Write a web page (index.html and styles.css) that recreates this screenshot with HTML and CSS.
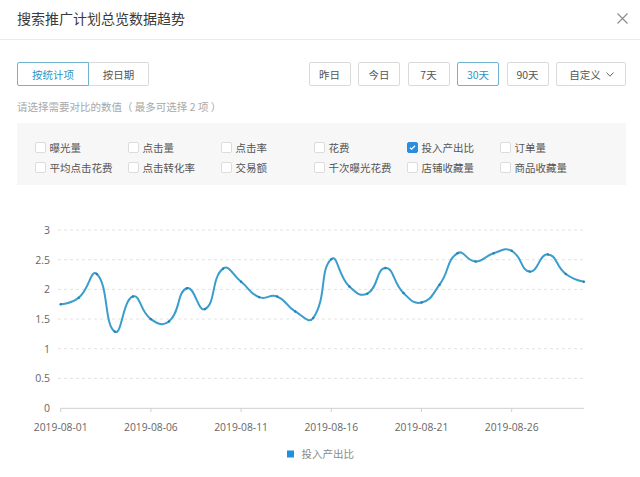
FILE: index.html
```html
<!DOCTYPE html>
<html lang="zh-CN">
<head>
<meta charset="utf-8">
<title>搜索推广计划总览数据趋势</title>
<link rel="stylesheet" href="styles.css">
</head>
<body>
<div class="header">
  <div class="title">搜索推广计划总览数据趋势</div>
  <svg class="close" viewBox="0 0 11 11"><path d="M0.5 0.5L10.5 10.5M10.5 0.5L0.5 10.5" /></svg>
</div>
<div class="toolbar">
  <div class="seg">
    <div class="btn active">按统计项</div>
    <div class="btn">按日期</div>
  </div>
  <div class="days">
    <div class="btn">昨日</div>
    <div class="btn">今日</div>
    <div class="btn">7天</div>
    <div class="btn active">30天</div>
    <div class="btn">90天</div>
    <div class="btn custom">自定义<svg class="chev" viewBox="0 0 8 5"><path d="M0.5 0.5L4 4.2L7.5 0.5"/></svg></div>
  </div>
</div>
<div class="hint">请选择需要对比的数值（ 最多可选择 2 项 ）</div>
<div class="metrics">
  <div class="opt"><span class="cb"></span>曝光量</div>
  <div class="opt"><span class="cb"></span>点击量</div>
  <div class="opt"><span class="cb"></span>点击率</div>
  <div class="opt"><span class="cb"></span>花费</div>
  <div class="opt"><span class="cb on"><svg viewBox="0 0 11 11"><path d="M2.3 5.6L4.4 7.6L8.6 3.3"/></svg></span>投入产出比</div>
  <div class="opt"><span class="cb"></span>订单量</div>
  <div class="opt"><span class="cb"></span>平均点击花费</div>
  <div class="opt"><span class="cb"></span>点击转化率</div>
  <div class="opt"><span class="cb"></span>交易额</div>
  <div class="opt"><span class="cb"></span>千次曝光花费</div>
  <div class="opt"><span class="cb"></span>店铺收藏量</div>
  <div class="opt"><span class="cb"></span>商品收藏量</div>
</div>
<svg class="chart" id="chart" width="640" height="292" viewBox="0 185 640 292">
  <g class="grid">
    <line x1="58" y1="230" x2="584" y2="230"/>
    <line x1="58" y1="259.7" x2="584" y2="259.7"/>
    <line x1="58" y1="289.4" x2="584" y2="289.4"/>
    <line x1="58" y1="319" x2="584" y2="319"/>
    <line x1="58" y1="348.7" x2="584" y2="348.7"/>
    <line x1="58" y1="378.4" x2="584" y2="378.4"/>
  </g>
  <line class="axis" x1="60.7" y1="408.3" x2="584" y2="408.3"/>
  <g class="ticks">
    <line x1="60.7" y1="408.3" x2="60.7" y2="412"/>
    <line x1="150.9" y1="408.3" x2="150.9" y2="412"/>
    <line x1="241.1" y1="408.3" x2="241.1" y2="412"/>
    <line x1="331.3" y1="408.3" x2="331.3" y2="412"/>
    <line x1="421.5" y1="408.3" x2="421.5" y2="412"/>
    <line x1="511.7" y1="408.3" x2="511.7" y2="412"/>
  </g>
  <g class="ylab">
    <text x="50" y="233.8">3</text>
    <text x="50" y="263.5">2.5</text>
    <text x="50" y="293.2">2</text>
    <text x="50" y="322.8">1.5</text>
    <text x="50" y="352.5">1</text>
    <text x="50" y="382.2">0.5</text>
    <text x="50" y="411.9">0</text>
  </g>
  <g class="xlab">
    <text x="60.7" y="431">2019-08-01</text>
    <text x="150.9" y="431">2019-08-06</text>
    <text x="241.1" y="431">2019-08-11</text>
    <text x="331.3" y="431">2019-08-16</text>
    <text x="421.5" y="431">2019-08-21</text>
    <text x="511.7" y="431">2019-08-26</text>
  </g>
  <path id="series" class="series" d=""/>
  <g id="dots" class="dots"></g>
  <rect class="legend-box" x="287" y="450.5" width="7" height="7"/>
  <text class="legend-text" x="301.5" y="458">投入产出比</text>
</svg>
<script src="script.js" defer></script>
</body>
</html>
```
FILE: styles.css
```css
* { box-sizing: border-box; }
html, body { margin: 0; padding: 0; background: #fff; }
body {
  font-family: "Noto Sans CJK SC", "Open Sans", sans-serif;
  color: #333;
  width: 640px;
  height: 477px;
  overflow: hidden;
}
.header {
  height: 40px;
  border-bottom: 1px solid #ebebeb;
  display: flex;
  align-items: center;
  justify-content: space-between;
  padding: 0 12px 3px 17px;
}
.title { font-size: 14px; color: #3a3a3a; }
.close { width: 11px; height: 11px; fill: none; stroke: #8a8a8a; stroke-width: 1.1; }
.toolbar {
  display: flex;
  justify-content: space-between;
  align-items: center;
  margin: 22px 14px 0 17px;
  height: 24px;
}
.seg { display: flex; }
.btn {
  height: 24px;
  border: 1px solid #dadada;
  background: #fff;
  font-size: 10.5px;
  color: #555;
  display: flex;
  align-items: center;
  justify-content: center;
  border-radius: 2px;
  white-space: nowrap;
}
.seg .btn:first-child { width: 72px; border-radius: 2px 0 0 2px; }
.seg .btn:last-child { width: 60px; border-radius: 0 2px 2px 0; border-left: none; }
.btn.active { border-color: #6fb4cf; color: #2f94c4; }
.days { display: flex; gap: 7.5px; }
.days .btn { width: 42px; }
.days .btn.custom { width: 70px; gap: 5px; padding-left: 1px; }
.chev { width: 8px; height: 5px; fill: none; stroke: #666; stroke-width: 1; }
.hint {
  margin: 13px 0 0 17px;
  font-size: 10.5px;
  line-height: 16px;
  color: #a8a8a8;
}
.metrics {
  margin: 8px 14px 0 17px;
  height: 62px;
  background: #f7f7f7;
  padding: 14px 0 0 18px;
  display: grid;
  grid-template-columns: repeat(6, 93px);
  grid-auto-rows: 20px;
}
.opt {
  display: flex;
  align-items: center;
  font-size: 10.5px;
  color: #555;
  white-space: nowrap;
}
.cb {
  width: 11px;
  height: 11px;
  border: 1px solid #dcdcdc;
  background: #fff;
  border-radius: 2px;
  margin-right: 3.5px;
  flex: none;
  display: flex;
}
.cb.on { background: #2a8de0; border-color: #2a8de0; }
.cb svg { width: 9px; height: 9px; fill: none; stroke: #fff; stroke-width: 1.5; }
.chart { display: block; }
.grid line { stroke: #e3e3e3; stroke-width: 1; stroke-dasharray: 3 3; }
.axis { stroke: #cfcfcf; stroke-width: 1; }
.ticks line { stroke: #cfcfcf; stroke-width: 1; }
.ylab text { font-family: "Open Sans", sans-serif; font-size: 10.5px; fill: #666; text-anchor: end; }
.xlab text { font-family: "Open Sans", sans-serif; font-size: 10.3px; fill: #666; text-anchor: middle; }
.series { fill: none; stroke: #3a9dcd; stroke-width: 2; stroke-linejoin: round; }
.dots circle { fill: #2a7faf; }
.legend-box { fill: #1f8fe0; }
.legend-text { font-family: "Noto Sans CJK SC", sans-serif; font-size: 10.5px; fill: #8a8a8a; }
```
FILE: script.js
```js
(function () {
  var vals = [1.75, 1.86, 2.26, 1.29, 1.88, 1.50, 1.46, 2.02, 1.67, 2.35, 2.13, 1.87, 1.88, 1.63, 1.52,
              2.51, 2.05, 1.93, 2.36, 1.94, 1.78, 2.08, 2.61, 2.47, 2.61, 2.65, 2.30, 2.59, 2.26, 2.13];
  var x0 = 60.7, dx = 18.04, y0 = 408.3, k = 59.43;
  var pts = vals.map(function (v, i) { return [x0 + dx * i, y0 - v * k]; });
  var smooth = 0.5, n = pts.length, cps = [];
  for (var i = 0; i < n; i++) {
    var p = pts[i];
    if (i === 0 || i === n - 1) { cps.push([p, p]); continue; }
    var a = pts[i - 1], b = pts[i + 1];
    var vx = (b[0] - a[0]) * smooth, vy = (b[1] - a[1]) * smooth;
    var d0 = Math.hypot(p[0] - a[0], p[1] - a[1]);
    var d1 = Math.hypot(b[0] - p[0], b[1] - p[1]);
    var s = d0 + d1; d0 /= s; d1 /= s;
    cps.push([[p[0] - vx * d0, p[1] - vy * d0], [p[0] + vx * d1, p[1] + vy * d1]]);
  }
  function f(q) { return q[0].toFixed(2) + ' ' + q[1].toFixed(2); }
  var d = 'M' + f(pts[0]);
  for (i = 0; i < n - 1; i++) {
    d += ' C' + f(cps[i][1]) + ' ' + f(cps[i + 1][0]) + ' ' + f(pts[i + 1]);
  }
  document.getElementById('series').setAttribute('d', d);
  var g = document.getElementById('dots');
  var ns = 'http://www.w3.org/2000/svg';
  pts.forEach(function (q) {
    var c = document.createElementNS(ns, 'circle');
    c.setAttribute('cx', q[0].toFixed(2));
    c.setAttribute('cy', q[1].toFixed(2));
    c.setAttribute('r', '1.2');
    g.appendChild(c);
  });
})();
```
